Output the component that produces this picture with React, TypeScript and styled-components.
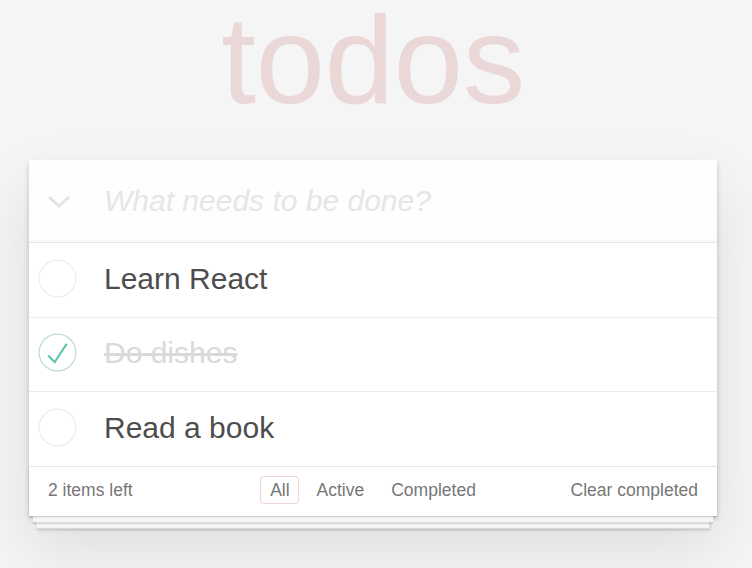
import styled, { createGlobalStyle } from "styled-components";

const GlobalStyle = createGlobalStyle`
    html, body {
        margin: 0;
        padding: 0;
        background: #f5f5f5;
    }
    body {
        color: #4d4d4d;
        font: 17.5px "Liberation Sans", Arial, sans-serif;
        line-height: 1.4em;
        font-weight: 300;
        -webkit-font-smoothing: antialiased;
    }
`;

type Todo = { title: string; done: boolean };

const todos: Todo[] = [
    { title: "Learn React", done: false },
    { title: "Do dishes", done: true },
    { title: "Read a book", done: false },
];

const filters = ["All", "Active", "Completed"];

const Check = ({ done }: { done: boolean }) => (
    <svg width="39" height="39" viewBox="-2 -2 104 104">
        <circle cx="50" cy="50" r="49" fill="none" stroke={done ? "#bddad5" : "#ededed"} strokeWidth="3" />
        {done && <path fill="#5dc2af" d="M72 25L42 71 27 56l-4 4 20 20 34-52z" />}
    </svg>
);

export default function App() {
    const left = todos.filter(t => !t.done).length;
    return <>
        <GlobalStyle />
        <Page>
            <Title>todos</Title>
            <TodoApp>
                <Header>
                    <ToggleAll>
                        <svg width="24" height="15" viewBox="0 0 24 15">
                            <path d="M2 3l10 9 10-9" fill="none" stroke="#e4e4e4" strokeWidth="3" />
                        </svg>
                    </ToggleAll>
                    <NewTodo placeholder="What needs to be done?" />
                </Header>
                <List>
                    {todos.map(t => (
                        <Item key={t.title}>
                            <Toggle><Check done={t.done} /></Toggle>
                            <Label $done={t.done}>{t.title}</Label>
                        </Item>
                    ))}
                </List>
                <Footer>
                    <Count>{left} items left</Count>
                    <Filters>
                        {filters.map(f => <Filter key={f} $selected={f === "All"}>{f}</Filter>)}
                    </Filters>
                    <Clear>Clear completed</Clear>
                </Footer>
            </TodoApp>
        </Page>
    </>;
}

const Page = styled.div`
    width: 688px;
    min-height: 100vh;
    margin-left: 29px;
    padding-top: 1px;
    box-sizing: border-box;
`;

const Title = styled.h1`
    margin: -27px 0 0;
    height: 186px;
    font-size: 125px;
    line-height: 172px;
    font-weight: 100;
    text-align: center;
    color: rgba(175, 47, 47, 0.15);
    letter-spacing: -0.5px;
`;

const TodoApp = styled.section`
    position: relative;
    background: #fff;
    box-shadow: 0 2.5px 5px 0 rgba(0, 0, 0, 0.2), 0 31px 62px 0 rgba(0, 0, 0, 0.1);
`;

const Header = styled.header`
    display: flex;
    align-items: center;
    height: 82px;
    background: rgba(0, 0, 0, 0.003);
    box-shadow: inset 0 -2.5px 1.25px rgba(0, 0, 0, 0.03);
`;

const ToggleAll = styled.div`
    width: 75px;
    padding-left: 18px;
    padding-top: 1px;
    box-sizing: border-box;
    svg { display: block; }
`;

const NewTodo = styled.input`
    flex: 1;
    border: none;
    outline: none;
    background: transparent;
    font-family: inherit;
    font-size: 30px;
    padding: 0 20px 0 0;
    color: #4d4d4d;
    &::placeholder {
        font-style: italic;
        color: #e6e6e6;
    }
`;

const List = styled.ul`
    margin: 0;
    padding: 0;
    list-style: none;
    border-top: 1px solid #e6e6e6;
`;

const Item = styled.li`
    display: flex;
    align-items: center;
    height: 73.5px;
    border-bottom: 1.25px solid #ededed;
    &:last-child { border-bottom: none; }
`;

const Toggle = styled.div`
    width: 75px;
    display: flex;
    padding-left: 9px;
    margin-top: -3px;
    box-sizing: border-box;
    svg { display: block; }
`;

const Label = styled.label<{ $done: boolean }>`
    font-size: 30px;
    line-height: 36px;
    color: ${p => p.$done ? "#d9d9d9" : "#4d4d4d"};
    text-decoration: ${p => p.$done ? "line-through" : "none"};
    margin-top: -2px;
`;

const Footer = styled.footer`
    position: relative;
    display: grid;
    grid-template-columns: 1fr auto 1fr;
    align-items: center;
    height: 50px;
    padding: 0 19px 2px;
    box-sizing: border-box;
    color: #777;
    border-top: 1.25px solid #e6e6e6;
    &::before {
        content: "";
        position: absolute;
        right: 0;
        bottom: 0;
        left: 0;
        height: 50px;
        overflow: hidden;
        pointer-events: none;
        box-shadow: 0 1.25px 1.25px rgba(0, 0, 0, 0.2),
            0 10px 0 -3.75px #f6f6f6,
            0 11.25px 1.25px -3.75px rgba(0, 0, 0, 0.2),
            0 20px 0 -7.5px #f6f6f6,
            0 21.25px 2.5px -7.5px rgba(0, 0, 0, 0.2);
    }
`;

const Count = styled.span``;

const Filters = styled.ul`
    display: flex;
    margin: 0;
    padding: 0;
    list-style: none;
`;

const Filter = styled.li<{ $selected: boolean }>`
    margin: 0 3.75px;
    padding: 2px 8.75px;
    line-height: 22px;
    border: 1.25px solid ${p => p.$selected ? "rgba(175, 47, 47, 0.2)" : "transparent"};
    border-radius: 3.75px;
`;

const Clear = styled.span`
    text-align: right;
`;
